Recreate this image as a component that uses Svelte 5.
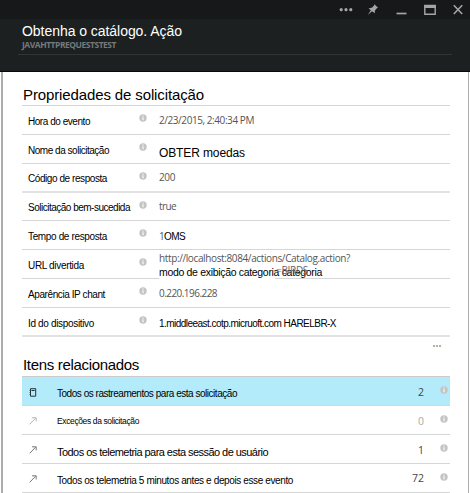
<script>
  const properties = [
    { label: 'Hora do evento', lw: 62, lt: 8, value: '2/23/2015, 2:40:34 PM', vw: 95, vt: 6, h: 29 },
    { label: 'Nome da solicitação', lw: 81, lt: 8, value: 'OBTER moedas', vw: 86, vt: 10, h: 29, kind: 'large' },
    { label: 'Código de resposta', lw: 79, lt: 7, value: '200', vw: 16, vt: 5, h: 29, thick: true },
    { label: 'Solicitação bem-sucedida', lw: 102, lt: 7, value: 'true', vw: 17, vt: 5, h: 28 },
    { label: 'Tempo de resposta', lw: 79, lt: 8, value: '1', rest: 'OMS', vw: 5, vt: 7, h: 29 },
    { label: 'URL divertida', lw: 56, lt: 8, value: 'http://localhost:8084/actions/Catalog.action?', vw: 191, vt: 0, h: 29, url: true },
    { label: 'Aparência IP chant', lw: 77, lt: 8, value: '0.220.196.228', vw: 58, vt: 6, h: 29 },
    { label: 'Id do dispositivo', lw: 66, lt: 8, value: '1.middleeast.cotp.micruoft.com HARELBR-X', vw: 177, vt: 8, h: 29, kind: 'dark', thick: true }
  ];

  const related = [
    { text: 'Todos os rastreamentos para esta solicitação', w: 180, t: 9, count: '2', ct: 7, h: 29, icon: 'book', selected: true },
    { text: 'Exceções da solicitação', w: 82, t: 7, count: '0', ct: 7, h: 29, icon: 'arrow', muted: true },
    { text: 'Todos os telemetria para esta sessão de usuário', w: 211, t: 9, count: '1', ct: 7, h: 29, icon: 'arrow', big: true },
    { text: 'Todos os telemetria 5 minutos antes e depois esse evento', w: 236, t: 9, count: '72', ct: 6, h: 29, icon: 'arrow' }
  ];

  // Spreads the letters so that the text takes the given width.
  function fit(node, width) {
    const n = node.textContent.length;
    const natural = node.getBoundingClientRect().width;
    node.style.letterSpacing = `${(width - natural) / n}px`;
  }
</script>

{#snippet info()}
  <svg class="info" width="8" height="8" viewBox="0 0 8 8">
    <circle cx="4" cy="4" r="3.7" fill="#c4c4c4" />
    <path d="M4 1.5v1M4 3.3v3" stroke="#fff" stroke-width="1.1" />
  </svg>
{/snippet}

<div class="blade">
  <header>
    <div class="bar">
      <svg width="14" height="19" viewBox="0 0 14 19" fill="#a3a5a7">
        <circle cx="2.2" cy="9.7" r="1.6" /><circle cx="7" cy="9.7" r="1.6" /><circle cx="11.8" cy="9.7" r="1.6" />
      </svg>
      <svg class="pin" width="12" height="19" viewBox="0 0 12 19" fill="#a3a5a7">
        <path d="M7.4 4.2L11 7.8 9.9 8.3 7.9 10.4 7.8 13.2 5 11.2.8 15 3.8 10.3 1.6 8.2 4.8 7.8 6.9 5.7Z" />
      </svg>
      <svg class="min" width="11" height="19" viewBox="0 0 11 19"><path d="M.5 13.5H10.5" stroke="#a3a5a7" stroke-width="1.7" /></svg>
      <svg class="max" width="12" height="19" viewBox="0 0 12 19">
        <path d="M.8 5.5H11.2V14.2H.8Z" fill="none" stroke="#a3a5a7" stroke-width="1.4" /><path d="M.2 5H11.8V8H.2Z" fill="#a3a5a7" />
      </svg>
      <svg class="close" width="10" height="19" viewBox="0 0 10 19"><path d="M.8 5.3L9.2 14M9.2 5.3L.8 14" stroke="#a3a5a7" stroke-width="1.6" /></svg>
    </div>
    <div class="titles">
      <h1><span use:fit={160}>Obtenha o catálogo. Ação</span></h1>
      <p><span use:fit={94}>JAVAHTTPREQUESTSTEST</span></p>
    </div>
  </header>

  <main>
    <h2 class="first"><span use:fit={181}>Propriedades de solicitação</span></h2>
    <div class="list">
      {#each properties as p}
        <div class="row" class:thick={p.thick} style:height="{p.h}px">
          <div class="label" style:margin-top="{p.lt}px"><span use:fit={p.lw}>{p.label}</span></div>
          {@render info()}
          <div class="value {p.kind ?? ''}" style:margin-top="{p.vt}px">
            <span use:fit={p.vw}>{p.value}</span>{#if p.rest}<span class="rest" use:fit={21}>{p.rest}</span>{/if}
            {#if p.url}
              <div class="second"><span use:fit={163}>modo de exibição categoria categoria</span></div>
              <div class="ghost"><span use:fit={32}>=BIRDS</span></div>
            {/if}
          </div>
        </div>
      {/each}
    </div>
    <div class="more"><i></i><i></i><i></i></div>

    <h2 class="second-title"><span use:fit={116}>Itens relacionados</span></h2>
    <div class="list related">
      {#each related as r}
        <div class="row" class:selected={r.selected} class:muted={r.muted} class:big={r.big} style:height="{r.h}px">
          <div class="icon">
            {#if r.icon === 'book'}
              <svg width="8" height="9" viewBox="0 0 8 9"><path d="M1.5.7H6.7V8.2H1.5ZM2.5 2.5H5.7" fill="none" stroke="#22343a" stroke-width="1" /><path d="M.6 2.5H2M.6 4.5H2M.6 6.5H2" stroke="#22343a" stroke-width=".8" /></svg>
            {:else}
              <svg width="8" height="8" viewBox="0 0 8 8"><path d="M.7 7.3L6.6 1.2M3 .8H7.2V4.4" fill="none" stroke={r.muted ? '#b4b4b4' : '#777'} stroke-width="1" /></svg>
            {/if}
          </div>
          <div class="text" style:margin-top="{r.t}px"><span use:fit={r.w}>{r.text}</span></div>
          <div class="count" style:margin-top="{r.ct}px">{r.count}</div>
          {@render info()}
        </div>
      {/each}
    </div>
  </main>
</div>

<style>
  :global(body) { background: #fff; overflow: hidden; }
  .blade {
    box-sizing: border-box; width: 470px; height: 493px; overflow: hidden; background: #fff;
    font: 10px/16px "Liberation Sans", Arial, sans-serif; color: #000; white-space: nowrap;
  }
  svg { display: block; flex: none; }
  header { height: 72px; background: #1c2021; box-sizing: border-box; border-bottom: 1px solid #080909; }
  .bar { display: flex; height: 19px; background: #17181a; padding-left: 339px; }
  .pin { margin-left: 14px; }
  .min { margin-left: 17px; }
  .max { margin-left: 17px; }
  .close { margin-left: 17px; }
  .titles { margin: 0 18px; padding: 4px 0 0 4px; height: 31px; border-bottom: 1px solid #303435; }
  h1 { margin: 0; font-size: 14px; font-weight: 400; line-height: 17px; color: #fff; }
  p { margin: 0; font: 700 8.5px/9px "Open Sans", sans-serif; color: #76797a; }
  main {
    box-sizing: border-box; height: 421px; padding: 0 19px 0 20px;
    border-left: 2px solid #adadad; border-right: 1px solid #adadad; margin-left: 1px;
    width: 468px;
  }
  h2 { margin: 0; font-size: 15px; font-weight: 400; line-height: 20px; }
  .first { padding-top: 13px; }
  .list { border-top: 1px solid #d4d4d4; margin-left: -1px; width: 428px; }
  .row { display: flex; align-items: flex-start; box-sizing: border-box; border-bottom: 1px solid #d6d6d6; }
  .thick { border-bottom: 2px solid #e2e2e2; }
  .label { width: 111px; padding-left: 6px; }
  .info { margin-top: 8px; }
  .value { font-family: "Open Sans", sans-serif; font-size: 10px; color: #555; margin-left: 12px; position: relative; }
  .large { font: 12px/16px "Liberation Sans", sans-serif; color: #000; }
  .dark, .rest { font: 10px/16px "Liberation Sans", sans-serif; color: #000; }
  .second { font: 10.5px/14px "Liberation Sans", sans-serif; color: #000; background: #fff; width: 116px; position: absolute; left: 0; top: 15px; }
  .ghost { position: absolute; left: 117px; top: 12px; color: #666; }
  .more { display: flex; gap: 1px; justify-content: flex-end; padding: 8px 8px 0 0; height: 2px; }
  .more i { width: 2px; height: 2px; background: #b5b19a; }
  .second-title { padding: 8px 0 1px; }
  .related { border-top-color: #ccc; }
  .selected { background: #b3ebfb; }
  .icon { width: 35px; padding: 11px 0 0 7px; box-sizing: border-box; }
  .text { flex: 1; }
  .related .text { font-size: 10px; }
  .related .big .text { font-size: 11px; }
  .related .muted .text { font-size: 8.5px; }
  .count { font: 10.5px/16px "Open Sans", sans-serif; color: #444; margin-right: 16px; }
  .muted .count { color: #aaa; }
  .related .info { margin-right: 2px; margin-top: 9px; }
</style>
